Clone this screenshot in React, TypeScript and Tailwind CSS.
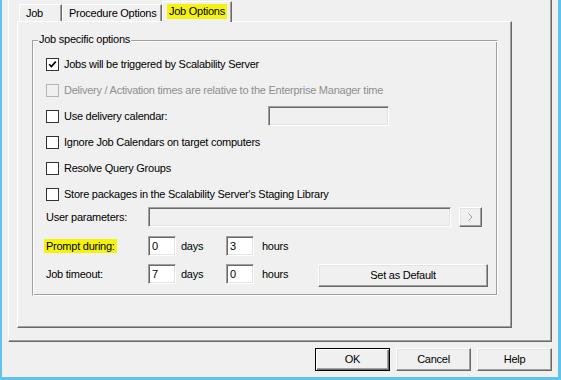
import React from 'react';

const raised =
  'border border-t-white border-l-white border-r-[#696969] border-b-[#696969] shadow-[inset_-1px_-1px_#a0a0a0,inset_1px_1px_#e3e3e3]';
const sunken =
  'border border-t-[#a0a0a0] border-l-[#a0a0a0] border-r-white border-b-white shadow-[inset_1px_1px_#696969,inset_-1px_-1px_#e3e3e3]';

function CheckBox({ checked, disabled }: { checked?: boolean; disabled?: boolean }) {
  return (
    <span
      className={`w-[13px] h-[13px] shrink-0 border flex items-center justify-center ${
        disabled ? 'border-[#b5b5b5] bg-[#f0f0f0]' : 'border-[#333333] bg-white'
      }`}
    >
      {checked && (
        <svg width="9" height="9" viewBox="0 0 9 9">
          <polyline points="1.2,4.2 3.4,6.6 7.8,1.6" fill="none" stroke="#000" strokeWidth="1.7" />
        </svg>
      )}
    </span>
  );
}

function CheckRow({
  label,
  checked,
  disabled,
  h = 'h-[26px]',
  children,
}: {
  label: string;
  checked?: boolean;
  disabled?: boolean;
  h?: string;
  children?: React.ReactNode;
}) {
  return (
    <div className={`${h} flex items-center`}>
      <CheckBox checked={checked} disabled={disabled} />
      <span className={`ml-[5px] ${children ? 'w-[204px]' : ''} ${disabled ? 'text-[#8f8f8f]' : ''}`}>{label}</span>
      {children}
    </div>
  );
}

function NumBox({ value }: { value: string }) {
  return (
    <div className={`w-[28px] h-[20px] bg-white ${sunken} flex items-center pl-[3px]`}>{value}</div>
  );
}

function Button({ label, w, h, isDefault }: { label: string; w: string; h: string; isDefault?: boolean }) {
  return (
    <div
      className={`${w} ${h} flex items-center justify-center ${
        isDefault
          ? 'border border-black shadow-[inset_1px_1px_white,inset_-1px_-1px_#696969,inset_-2px_-2px_#a0a0a0]'
          : raised
      }`}
    >
      {label}
    </div>
  );
}

const tabs = [
  { label: 'Job', w: 'w-[43px]' },
  { label: 'Procedure Options', w: 'w-[100px]' },
];

export default function App() {
  return (
    <div className="w-[561px] h-[380px] overflow-hidden bg-[#f0f0f0] border-l-2 border-r-[3px] border-b-[3px] border-[#5fc4ec] font-['Liberation_Sans',Arial,sans-serif] text-[11px] leading-[13px] tracking-[-0.25px] whitespace-nowrap text-black flex flex-col">
      {/* dialog frame */}
      <div className="ml-[6px] w-[544px] h-[342px] shrink-0 border-l border-l-white border-r border-r-[#696969] border-b border-b-[#696969] shadow-[inset_-1px_-1px_#a0a0a0]">
        <div className="ml-[8px]">
          {/* tabs */}
          <div className="h-[21px] pl-[2px] flex items-end">
            {tabs.map((t) => (
              <div
                key={t.label}
                className={`${t.w} h-[17px] px-[6px] flex items-center border-t border-l border-t-white border-l-white border-r border-r-[#696969] shadow-[inset_-1px_0_#a0a0a0]`}
              >
                {t.label}
              </div>
            ))}
            <div className="relative z-10 w-[70px] h-[21px] -mb-px bg-[#f0f0f0] pl-[4px] pb-[2px] flex items-center border-t border-l border-t-white border-l-white border-r border-r-[#696969] shadow-[inset_-1px_0_#a0a0a0]">
              <span className="bg-[#f5f20c] px-[2px] py-[1px]">Job Options</span>
            </div>
          </div>

          {/* tab page */}
          <div className="w-[495px] h-[307px] border-t border-l border-t-white border-l-white border-r border-b border-r-[#696969] border-b-[#696969] shadow-[inset_-1px_-1px_#a0a0a0]">
            {/* group box */}
            <div className="relative ml-[14px] mt-[18px] w-[466px] h-[256px] border border-t-[#a0a0a0] border-l-[#a0a0a0] border-r-white border-b-white shadow-[inset_1px_1px_white,inset_-1px_-1px_#a0a0a0] pt-[10px] pl-[13px]">
              <span className="absolute left-[5px] top-[-8px] px-[1px] bg-[#f0f0f0]">Job specific options</span>

              <CheckRow label="Jobs will be triggered by Scalability Server" checked />
              <CheckRow label="Delivery / Activation times are relative to the Enterprise Manager time" disabled />
              <CheckRow label="Use delivery calendar:">
                <div className={`w-[121px] h-[20px] bg-[#f0f0f0] ${sunken}`} />
              </CheckRow>
              <CheckRow label="Ignore Job Calendars on target computers" />
              <CheckRow label="Resolve Query Groups" />
              <CheckRow label="Store packages in the Scalability Server's Staging Library" />

              <div className="h-[20px] flex items-center">
                <span className="w-[102px]">User parameters:</span>
                <div className={`w-[303px] h-[20px] bg-[#f0f0f0] ${sunken}`} />
                <div className={`ml-[8px] w-[23px] h-[20px] ${raised} flex items-center justify-center`}>
                  <svg width="5" height="8" viewBox="0 0 5 8">
                    <polyline points="0.5,0.5 4,4 0.5,7.5" fill="none" stroke="#a0a0a0" strokeWidth="1" />
                  </svg>
                </div>
              </div>

              <div className="mt-[9px] h-[20px] flex items-center">
                <span className="w-[102px]">
                  <span className="bg-[#f5f20c] ml-[-2px] px-[2px] py-[1px]">Prompt during:</span>
                </span>
                <NumBox value="0" />
                <span className="w-[50px] pl-[5px]">days</span>
                <NumBox value="3" />
                <span className="pl-[8px]">hours</span>
              </div>

              <div className="mt-[8px] flex items-start">
                <div className="h-[20px] flex items-center">
                  <span className="w-[102px]">Job timeout:</span>
                  <NumBox value="7" />
                  <span className="w-[50px] pl-[5px]">days</span>
                  <NumBox value="0" />
                  <span className="w-[64px] pl-[8px]">hours</span>
                </div>
                <Button label="Set as Default" w="w-[170px]" h="h-[23px]" />
              </div>
            </div>
          </div>
        </div>
      </div>

      {/* dialog buttons */}
      <div className="ml-[6px] w-[544px] mt-[6px] flex justify-end gap-[6px]">
        <Button label="OK" w="w-[75px]" h="h-[23px]" isDefault />
        <Button label="Cancel" w="w-[75px]" h="h-[23px]" />
        <Button label="Help" w="w-[75px]" h="h-[23px]" />
      </div>
    </div>
  );
}
